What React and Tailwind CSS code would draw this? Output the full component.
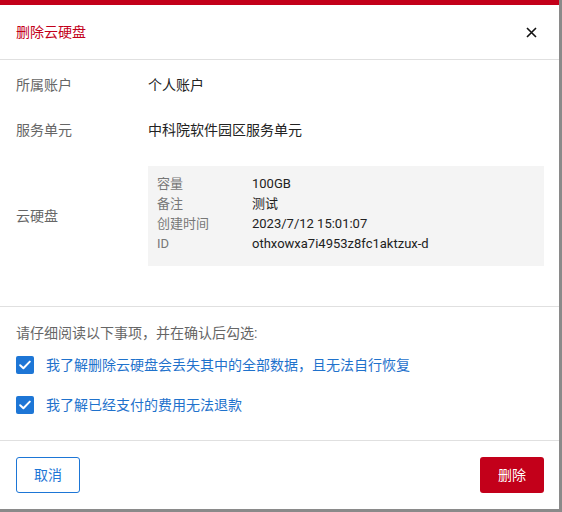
import React, { useState } from 'react';

const diskInfo = [
  { label: '容量', value: '100GB' },
  { label: '备注', value: '测试' },
  { label: '创建时间', value: '2023/7/12 15:01:07' },
  { label: 'ID', value: 'othxowxa7i4953z8fc1aktzux-d' }
];

const CheckIcon = () => (
  <svg width="12" height="10" viewBox="0 0 12 10" fill="none">
    <path d="M1.2 5.2L4.4 8.2L10.8 1.6" stroke="white" strokeWidth="2" strokeLinecap="round" strokeLinejoin="round" />
  </svg>
);

const Checkbox = ({ checked, onChange, children }) => (
  <label className="flex items-center h-[20px] cursor-pointer">
    <span
      onClick={onChange}
      className={`w-[18px] h-[18px] rounded-[2px] flex items-center justify-center ${
        checked ? 'bg-[#1d76d6]' : 'border border-gray-400 bg-white'
      }`}
    >
      {checked && <CheckIcon />}
    </span>
    <span className="ml-3 text-[14px] text-[#1f72cc]">{children}</span>
  </label>
);

const App = () => {
  const [agree1, setAgree1] = useState(true);
  const [agree2, setAgree2] = useState(true);

  return (
    <div className="w-[562px] h-[512px] bg-[#8a8a8a] font-['Roboto','Noto_Sans_CJK_SC',sans-serif]">
      <div className="w-[559px] h-[509px] bg-white flex flex-col">
        <div className="h-[5px] bg-[#c3001a]" />

        {/* Header */}
        <div className="h-[55px] flex items-center justify-between pl-4 pr-[22px] border-b border-[#e0e0e0]">
          <h2 className="text-[14px] text-[#c3001a]">删除云硬盘</h2>
          <svg width="11" height="11" viewBox="0 0 11 11">
            <path d="M1 1L10 10M10 1L1 10" stroke="#111" strokeWidth="1.6" />
          </svg>
        </div>

        {/* Info rows */}
        <div className="h-[247px] pl-4 pr-[15px] pt-[15px] text-[14px] border-b border-[#e0e0e0]">
          <div className="flex items-center h-[20px]">
            <span className="w-[132px] text-[#666]">所属账户</span>
            <span className="text-[#222]">个人账户</span>
          </div>
          <div className="flex items-center h-[20px] mt-[25px]">
            <span className="w-[132px] text-[#666]">服务单元</span>
            <span className="text-[#222]">中科院软件园区服务单元</span>
          </div>
          <div className="flex items-center mt-[26px]">
            <span className="w-[132px] text-[#666]">云硬盘</span>
            <div className="w-[396px] h-[100px] bg-[#f4f4f4] px-[9px] pt-[8px] text-[13px]">
              {diskInfo.map((row) => (
                <div key={row.label} className="flex items-center h-[20px]">
                  <span className="w-[95px] text-[#777]">{row.label}</span>
                  <span className="text-[#222]">{row.value}</span>
                </div>
              ))}
            </div>
          </div>
        </div>

        {/* Confirmation */}
        <div className="h-[134px] px-4 pt-[16px] border-b border-[#e0e0e0]">
          <p className="text-[14px] text-[#666] h-[20px] leading-[20px]">请仔细阅读以下事项，并在确认后勾选:</p>
          <div className="mt-[12px]">
            <Checkbox checked={agree1} onChange={() => setAgree1(!agree1)}>
              我了解删除云硬盘会丢失其中的全部数据，且无法自行恢复
            </Checkbox>
          </div>
          <div className="mt-[20px]">
            <Checkbox checked={agree2} onChange={() => setAgree2(!agree2)}>
              我了解已经支付的费用无法退款
            </Checkbox>
          </div>
        </div>

        {/* Footer */}
        <div className="flex-1 flex items-center justify-between pl-4 pr-[15px]">
          <button className="w-[64px] h-[36px] rounded-[3px] border border-[#1d76d6] text-[14px] text-[#1d76d6] bg-white">
            取消
          </button>
          <button
            disabled={!agree1 || !agree2}
            className="w-[64px] h-[36px] rounded-[3px] bg-[#c3001a] text-[14px] text-white"
          >
            删除
          </button>
        </div>
      </div>
    </div>
  );
};

export default App;
